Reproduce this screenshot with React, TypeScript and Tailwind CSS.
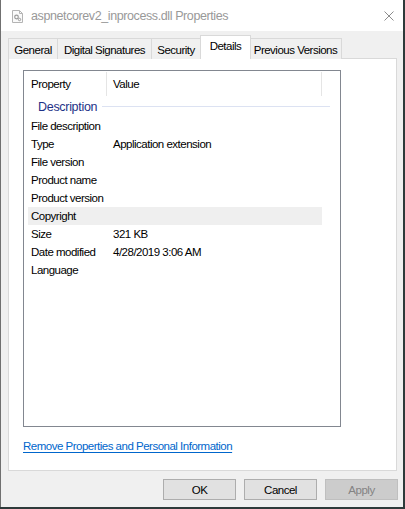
import React from "react";

const tabs: { label: string; w: string }[] = [
  { label: "General", w: "w-[50px]" },
  { label: "Digital Signatures", w: "w-[95px]" },
  { label: "Security", w: "w-[50px]" },
  { label: "Details", w: "w-[51px]" },
  { label: "Previous Versions", w: "w-[93px]" },
];

const rows: { name: string; value: string; hl?: boolean }[] = [
  { name: "File description", value: "" },
  { name: "Type", value: "Application extension" },
  { name: "File version", value: "" },
  { name: "Product name", value: "" },
  { name: "Product version", value: "" },
  { name: "Copyright", value: "", hl: true },
  { name: "Size", value: "321 KB" },
  { name: "Date modified", value: "4/28/2019 3:06 AM" },
  { name: "Language", value: "" },
];

const FileIcon = () => (
  <svg width="11" height="13" viewBox="0 0 11 13">
    <path d="M0.5 0.5h7l3 3v9h-10z" fill="#fafafa" stroke="#b4b4b4" />
    <path d="M7.5 0.5v3h3" fill="none" stroke="#b4b4b4" />
    <circle cx="4.5" cy="7" r="1.8" fill="none" stroke="#9a9a9a" strokeWidth="1.2" />
    <circle cx="7.5" cy="9.5" r="1.2" fill="none" stroke="#9a9a9a" strokeWidth="1" />
  </svg>
);

const CloseIcon = () => (
  <svg width="10" height="10" viewBox="0 0 10 10">
    <path d="M0.5 0.5L9.5 9.5M9.5 0.5L0.5 9.5" stroke="#8c8c8c" strokeWidth="1" />
  </svg>
);

export default function App() {
  return (
    <div
      className="w-[405px] h-[509px] bg-[#2e3a3a] text-[11.5px] tracking-[-0.5px] leading-[16px] text-black overflow-hidden"
      style={{ fontFamily: '"Liberation Sans", Arial, sans-serif' }}
    >
      <div className="w-[403px] h-[507px] bg-[#f0f0f0] border-l border-[#707070] flex flex-col">
        {/* title bar */}
        <div className="h-[31px] bg-white flex items-center shrink-0">
          <div className="ml-[11px] mt-[1px]">
            <FileIcon />
          </div>
          <span className="ml-[8px] text-[12.5px] tracking-[-0.4px] text-[#999999]">
            aspnetcorev2_inprocess.dll Properties
          </span>
          <div className="ml-auto mr-[9px] flex">
            <CloseIcon />
          </div>
        </div>

        {/* tabs */}
        <div className="flex items-end ml-[7px] mt-[5px] h-[23px] relative z-10">
          {tabs.map((t) =>
            t.label === "Details" ? (
              <div
                key={t.label}
                className={`${t.w} h-[24px] -mx-[1px] bg-white border border-b-0 border-[#d9d9d9] flex items-center justify-center pb-[3px] relative z-10 whitespace-nowrap`}
              >
                {t.label}
              </div>
            ) : (
              <div
                key={t.label}
                className={`${t.w} h-[21px] bg-[#f0f0f0] border border-b-0 border-[#d9d9d9] -ml-[1px] first:ml-0 flex items-center justify-center pt-[1px] whitespace-nowrap`}
              >
                {t.label}
              </div>
            )
          )}
        </div>

        {/* tab panel */}
        <div className="ml-[7px] mr-[6px] -mt-[1px] h-[413px] bg-white border border-[#d9d9d9] flex flex-col">
          <div className="mt-[11px] ml-[14px] w-[318px] h-[357px] border border-[#828790] flex flex-col">
            <div className="h-[26px] flex items-center">
              <span className="ml-[7px] w-[75px]">Property</span>
              <span className="w-[1px] h-[24px] bg-[#e5e5e5]" />
              <span className="ml-[6px]">Value</span>
              <span className="ml-auto mr-[18px] w-[1px] h-[24px] bg-[#e5e5e5]" />
            </div>
            <div className="h-[19px] flex items-center">
              <span className="ml-[14px] text-[#1e3287] text-[12.5px] tracking-[-0.3px]">Description</span>
              <span className="ml-[5px] mr-[10px] flex-1 h-[1px] bg-[#dce2f2]" />
            </div>
            <div className="mt-[1px] flex flex-col">
              {rows.map((r) => (
                <div
                  key={r.name}
                  className={`h-[18px] flex items-center mr-[18px] ml-[4px] ${r.hl ? "bg-[#efefef]" : ""}`}
                >
                  <span className="ml-[3px] w-[82px] whitespace-nowrap">{r.name}</span>
                  <span className="whitespace-nowrap">{r.value}</span>
                </div>
              ))}
            </div>
          </div>
          <div className="mt-[11px] ml-[14px]">
            <span className="text-[#0066cc] underline underline-offset-2">
              Remove Properties and Personal Information
            </span>
          </div>
        </div>

        {/* buttons */}
        <div className="flex justify-end gap-[8px] mt-[8px] mr-[5px]">
          <button className="w-[73px] h-[21px] bg-[#e1e1e1] border border-[#adadad] text-black">OK</button>
          <button className="w-[73px] h-[21px] bg-[#e1e1e1] border border-[#adadad] text-black">Cancel</button>
          <button className="w-[73px] h-[21px] bg-[#cccccc] border border-[#bfbfbf] text-[#838383]">Apply</button>
        </div>
      </div>
    </div>
  );
}
